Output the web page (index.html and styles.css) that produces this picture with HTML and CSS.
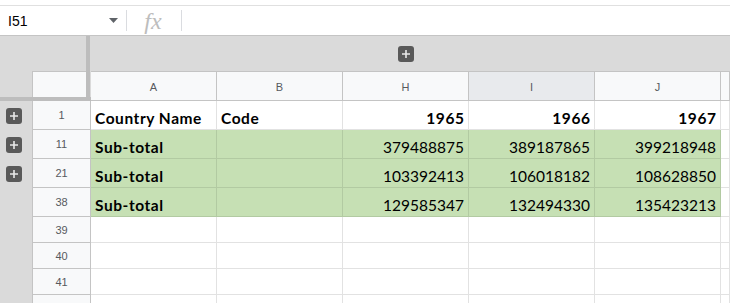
FILE: index.html
```html
<!DOCTYPE html>
<html>
<head>
<meta charset="utf-8">
<link rel="stylesheet" href="styles.css">
</head>
<body>
<div class="topline"></div>
<div class="fbar">
  <div class="namebox">
    <span class="ref">I51</span>
    <svg class="caret" width="9" height="5" viewBox="0 0 9 5"><path d="M0 0h9L4.5 5z" fill="#5f6368"/></svg>
  </div>
  <div class="sep"></div>
  <div class="fx">fx</div>
  <div class="sep"></div>
</div>
<div class="sheet">
  <div class="corner">
    <div class="corner-top">
      <div class="corner-left">
        <div class="corner-gap"></div>
        <div class="corner-row">
          <div class="corner-strip"></div>
          <div class="corner-box"></div>
        </div>
      </div>
      <div class="vbar"></div>
      <div class="corner-end"></div>
    </div>
    <div class="hbar"></div>
  </div>

  <div class="gcell"></div>
  <div class="gcell"></div>
  <div class="gcell"><span class="plus"><svg width="16" height="16" viewBox="0 0 16 16"><path d="M8 4v8M4 8h8" stroke="#e8e8e8" stroke-width="1.6"/></svg></span></div>
  <div class="gcell"></div>
  <div class="gcell"></div>
  <div class="gcell"></div>

  <div class="chead">A</div>
  <div class="chead">B</div>
  <div class="chead">H</div>
  <div class="chead sel">I</div>
  <div class="chead">J</div>
  <div class="chead"></div>

  <div class="strip"><span class="plus"><svg width="16" height="16" viewBox="0 0 16 16"><path d="M8 4v8M4 8h8" stroke="#e8e8e8" stroke-width="1.6"/></svg></span></div>
  <div class="rhead">1</div>
  <div class="cell b">Country Name</div>
  <div class="cell b">Code</div>
  <div class="cell b r">1965</div>
  <div class="cell b r">1966</div>
  <div class="cell b r">1967</div>
  <div class="cell"></div>

  <div class="strip"><span class="plus"><svg width="16" height="16" viewBox="0 0 16 16"><path d="M8 4v8M4 8h8" stroke="#e8e8e8" stroke-width="1.6"/></svg></span></div>
  <div class="rhead">11</div>
  <div class="cell g b">Sub-total</div>
  <div class="cell g"></div>
  <div class="cell g r">379488875</div>
  <div class="cell g r">389187865</div>
  <div class="cell g r">399218948</div>
  <div class="cell"></div>

  <div class="strip"><span class="plus"><svg width="16" height="16" viewBox="0 0 16 16"><path d="M8 4v8M4 8h8" stroke="#e8e8e8" stroke-width="1.6"/></svg></span></div>
  <div class="rhead">21</div>
  <div class="cell g b">Sub-total</div>
  <div class="cell g"></div>
  <div class="cell g r">103392413</div>
  <div class="cell g r">106018182</div>
  <div class="cell g r">108628850</div>
  <div class="cell"></div>

  <div class="strip"></div>
  <div class="rhead">38</div>
  <div class="cell g b">Sub-total</div>
  <div class="cell g"></div>
  <div class="cell g r">129585347</div>
  <div class="cell g r">132494330</div>
  <div class="cell g r">135423213</div>
  <div class="cell"></div>

  <div class="strip"></div>
  <div class="rhead">39</div>
  <div class="cell"></div><div class="cell"></div><div class="cell"></div><div class="cell"></div><div class="cell"></div><div class="cell"></div>

  <div class="strip"></div>
  <div class="rhead">40</div>
  <div class="cell"></div><div class="cell"></div><div class="cell"></div><div class="cell"></div><div class="cell"></div><div class="cell"></div>

  <div class="strip"></div>
  <div class="rhead">41</div>
  <div class="cell"></div><div class="cell"></div><div class="cell"></div><div class="cell"></div><div class="cell"></div><div class="cell"></div>

  <div class="strip"></div>
  <div class="rhead"></div>
  <div class="cell"></div><div class="cell"></div><div class="cell"></div><div class="cell"></div><div class="cell"></div><div class="cell"></div>
</div>
</body>
</html>
```
FILE: styles.css
```css
* { box-sizing: border-box; }
html, body { margin: 0; padding: 0; }
body {
  width: 730px;
  height: 303px;
  overflow: hidden;
  background: #fff;
  font-family: "Liberation Sans", Arial, sans-serif;
}
.topline {
  height: 6px;
  border-bottom: 1px solid #e0e0e0;
}
.fbar {
  height: 30px;
  display: flex;
  align-items: center;
  border-bottom: 1px solid #c4c4c4;
}
.namebox {
  width: 126px;
  display: flex;
  align-items: center;
  padding-left: 8px;
  padding-right: 8px;
}
.ref {
  font-size: 14px;
  color: #000;
  flex: 1;
}
.caret { display: block; }
.sep {
  width: 1px;
  height: 21px;
  background: #dadce0;
}
.fx {
  width: 54px;
  text-align: center;
  font-family: "Liberation Serif", "Times New Roman", serif;
  font-style: italic;
  font-size: 24px;
  color: #bdbdbd;
  line-height: 22px;
  padding-right: 2px;
}
.sheet {
  display: grid;
  grid-template-columns: 32px 59px 126px 126px 126px 126px 126px 1fr;
  grid-template-rows: 36px 29px 29px 29px 29px 29px 26px 26px 26px 26px;
}
.corner {
  grid-column: 1 / 3;
  grid-row: 1 / 3;
  display: flex;
  flex-direction: column;
  background: #dadada;
}
.corner-top { display: flex; height: 61px; }
.corner-left { width: 86px; display: flex; flex-direction: column; }
.corner-gap { height: 35px; }
.corner-row { flex: 1; display: flex; }
.corner-strip { width: 32px; }
.corner-box {
  flex: 1;
  background: #f8f9fa;
  border-top: 1px solid #c4c4c4;
  border-left: 1px solid #c4c4c4;
}
.vbar { width: 4px; background: #bdbdbd; }
.corner-end { flex: 1; }
.hbar { height: 4px; background: #bdbdbd; }

.gcell {
  background: #dadada;
  border-bottom: 1px solid #c4c4c4;
  display: flex;
  align-items: center;
  justify-content: center;
}
.plus {
  width: 16px;
  height: 16px;
  background: #595959;
  border-radius: 3px;
  display: block;
}
.plus svg { display: block; }
.chead {
  background: #f8f9fa;
  border-right: 1px solid #c4c4c4;
  border-bottom: 1px solid #c4c4c4;
  font-size: 11px;
  color: #575a5e;
  display: flex;
  align-items: center;
  justify-content: center;
  padding-top: 1px;
}
.chead.sel { background: #e8eaed; }
.strip {
  background: #dadada;
  display: flex;
  align-items: center;
  padding-left: 6px;
}
.rhead {
  background: #f8f9fa;
  border-left: 1px solid #c4c4c4;
  border-right: 1px solid #c4c4c4;
  border-bottom: 1px solid #c4c4c4;
  font-size: 11px;
  color: #575a5e;
  display: flex;
  align-items: center;
  justify-content: center;
}
.cell {
  border-right: 1px solid #e2e2e2;
  border-bottom: 1px solid #e2e2e2;
  font-family: Lato, "Open Sans", sans-serif;
  font-size: 15.5px;
  line-height: 18px;
  color: #000;
  display: flex;
  align-items: flex-end;
  padding: 0 4px 2px 4px;
  white-space: nowrap;
  overflow: hidden;
}
.cell.b { font-weight: bold; letter-spacing: 0.55px; }
.cell.r { justify-content: flex-end; }
.cell.b.r { padding-right: 3.5px; }
.cell.g {
  background: #c6e0b4;
  border-right-color: #b2caa2;
  border-bottom-color: #b2caa2;
}
```
